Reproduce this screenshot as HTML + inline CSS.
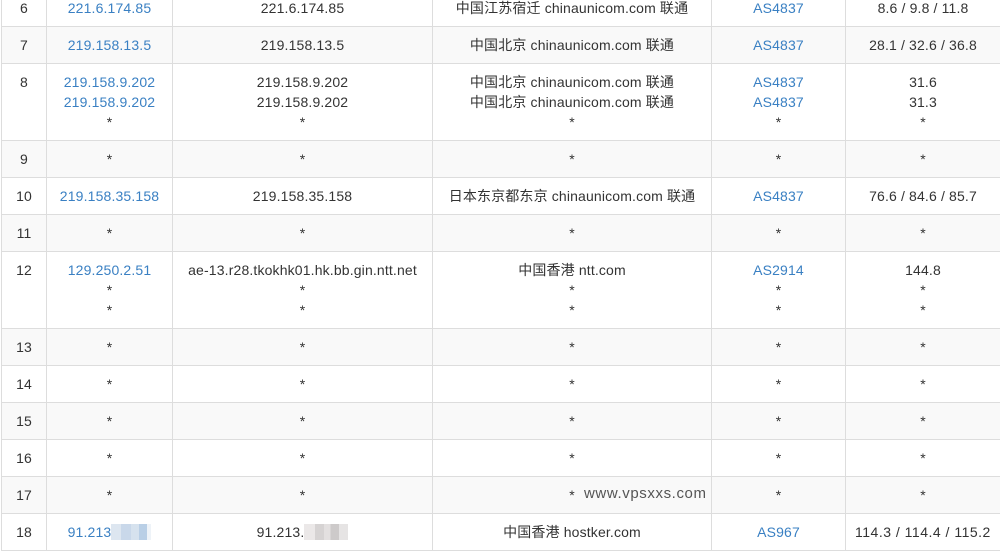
<!DOCTYPE html>
<html><head><meta charset="utf-8"><style>
body{margin:0;background:#fff;width:1000px;height:549px;overflow:hidden;position:relative;font-family:"Liberation Sans","Noto Sans CJK SC",sans-serif;font-size:14px;color:#333;letter-spacing:0.15px}
table{position:absolute;left:1px;top:-11px;border-collapse:collapse;table-layout:fixed;width:999px}
td{border:1px solid #ddd;padding:8px 0;line-height:20px;text-align:center;vertical-align:top;white-space:nowrap;overflow:hidden}
tr.g td{background:#f9f9f9}
.l{color:#3a80c3}
.wm{position:absolute;left:584px;top:485px;font-size:15px;color:#555;letter-spacing:0.6px}
.blur{display:inline-block;width:40px;height:16px;vertical-align:-3px;background:linear-gradient(90deg,#dde6f0 0 25%,#c9d8ea 25% 50%,#d6e2ee 50% 70%,#b9cfe6 70% 90%,#eef3f8 90%)}
.blur2{display:inline-block;width:44px;height:16px;vertical-align:-3px;background:linear-gradient(90deg,#ebe8e8 0 25%,#d6d3d3 25% 45%,#e3e0e0 45% 60%,#cdcaca 60% 80%,#e6e4e4 80%)}
</style></head><body>
<table>
<colgroup><col style="width:45px"><col style="width:126px"><col style="width:260px"><col style="width:279px"><col style="width:134px"><col style="width:155px"></colgroup>
<tr><td>6</td><td class="l">221.6.174.85</td><td>221.6.174.85</td><td>中国江苏宿迁 chinaunicom.com 联通</td><td class="l">AS4837</td><td>8.6 / 9.8 / 11.8</td></tr>
<tr class="g"><td>7</td><td class="l">219.158.13.5</td><td>219.158.13.5</td><td>中国北京 chinaunicom.com 联通</td><td class="l">AS4837</td><td>28.1 / 32.6 / 36.8</td></tr>
<tr><td>8</td><td class="l">219.158.9.202<br>219.158.9.202<br><span style="color:#333">*</span></td><td>219.158.9.202<br>219.158.9.202<br>*</td><td>中国北京 chinaunicom.com 联通<br>中国北京 chinaunicom.com 联通<br>*</td><td class="l">AS4837<br>AS4837<br><span style="color:#333">*</span></td><td>31.6<br>31.3<br>*</td></tr>
<tr class="g"><td>9</td><td>*</td><td>*</td><td>*</td><td>*</td><td>*</td></tr>
<tr><td>10</td><td class="l">219.158.35.158</td><td>219.158.35.158</td><td>日本东京都东京 chinaunicom.com 联通</td><td class="l">AS4837</td><td>76.6 / 84.6 / 85.7</td></tr>
<tr class="g"><td>11</td><td>*</td><td>*</td><td>*</td><td>*</td><td>*</td></tr>
<tr><td>12</td><td class="l">129.250.2.51<br><span style="color:#333">*<br>*</span></td><td>ae-13.r28.tkokhk01.hk.bb.gin.ntt.net<br>*<br>*</td><td>中国香港 ntt.com<br>*<br>*</td><td class="l">AS2914<br><span style="color:#333">*<br>*</span></td><td>144.8<br>*<br>*</td></tr>
<tr class="g"><td>13</td><td>*</td><td>*</td><td>*</td><td>*</td><td>*</td></tr>
<tr><td>14</td><td>*</td><td>*</td><td>*</td><td>*</td><td>*</td></tr>
<tr class="g"><td>15</td><td>*</td><td>*</td><td>*</td><td>*</td><td>*</td></tr>
<tr><td>16</td><td>*</td><td>*</td><td>*</td><td>*</td><td>*</td></tr>
<tr class="g"><td>17</td><td>*</td><td>*</td><td>*</td><td>*</td><td>*</td></tr>
<tr><td>18</td><td class="l">91.213<span class="blur"></span></td><td>91.213.<span class="blur2"></span></td><td>中国香港 hostker.com</td><td class="l">AS967</td><td style="text-align:left;padding-left:9px;letter-spacing:0.5px">114.3 / 114.4 / 115.2</td></tr>
</table>
<div class="wm">www.vpsxxs.com</div>
</body></html>
